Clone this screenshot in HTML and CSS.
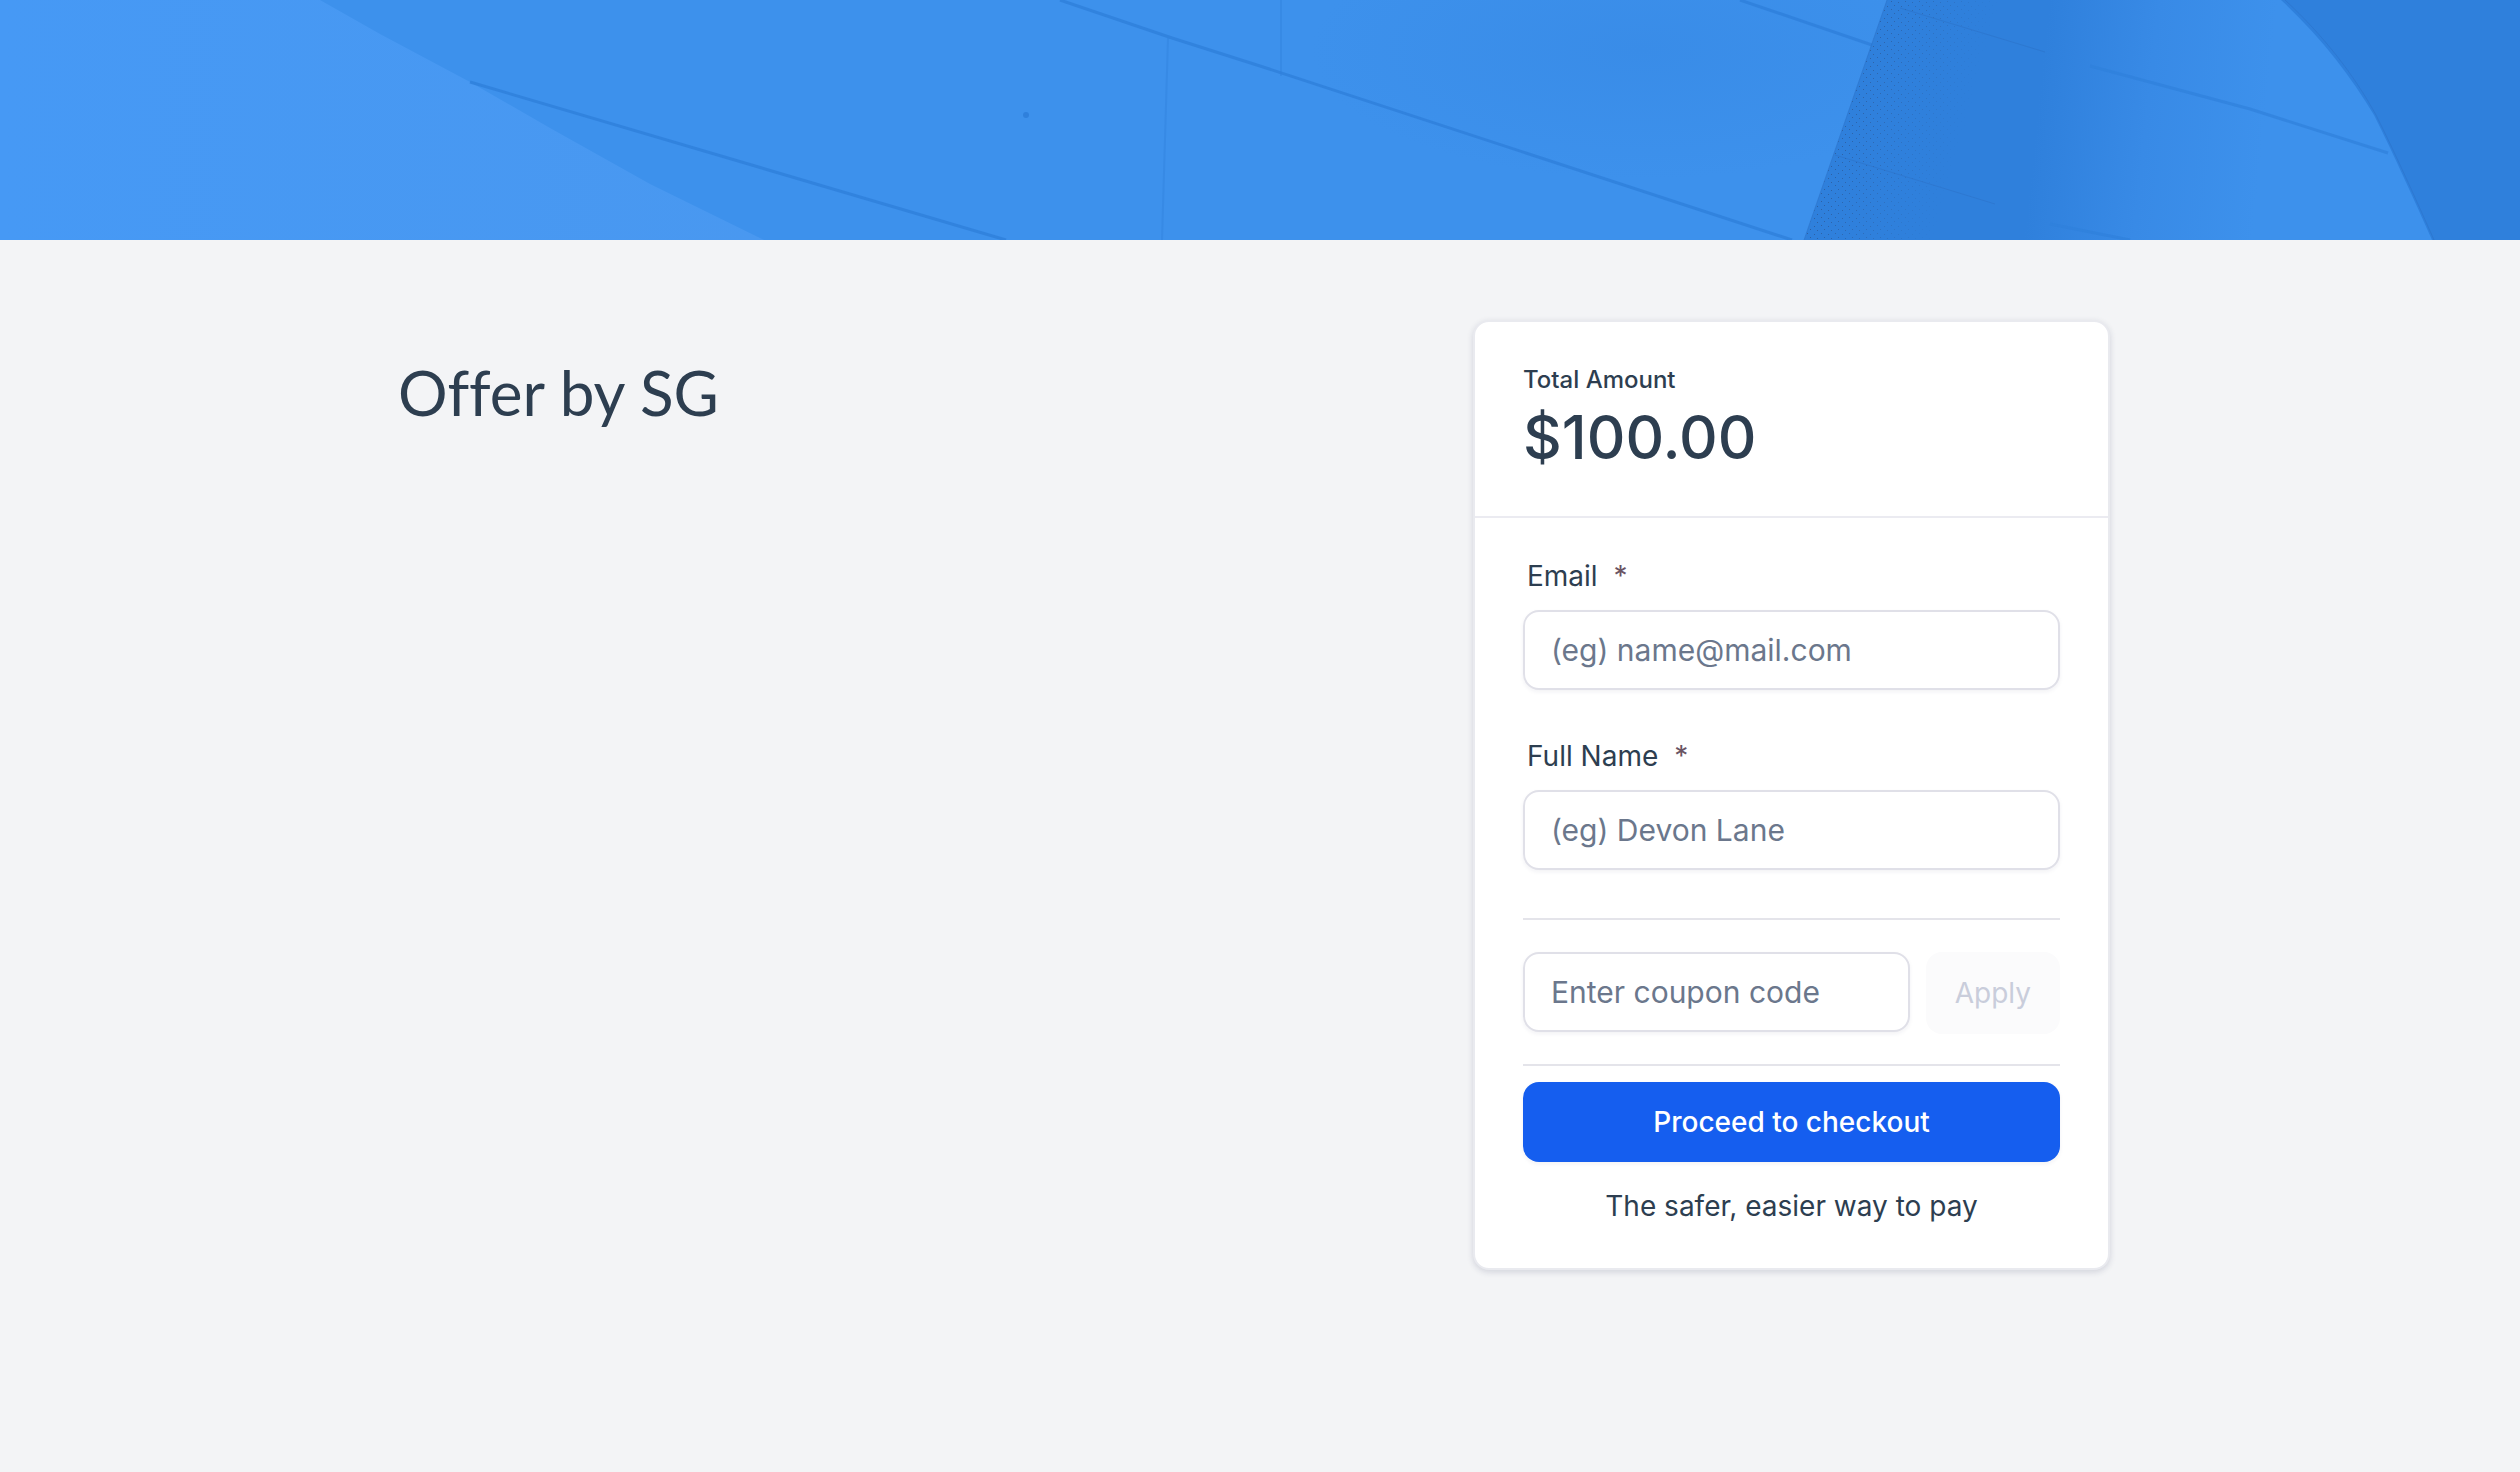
FILE: index.html
```html
<!DOCTYPE html>
<html lang="en">
<head>
<meta charset="utf-8">
<meta name="viewport" content="width=device-width, initial-scale=1">
<title>Offer by SG</title>
<link rel="stylesheet" href="styles.css">
</head>
<body>
<header class="banner">
  <svg class="banner-art" viewBox="0 0 2520 240" preserveAspectRatio="xMidYMid slice" aria-hidden="true">
    <defs>
      <linearGradient id="sky" x1="0" x2="1" y1="0" y2="0">
        <stop offset="0" stop-color="#4699f5"/>
        <stop offset="1" stop-color="#4998f0"/>
      </linearGradient>
      <linearGradient id="fold" gradientUnits="userSpaceOnUse" x1="1850" x2="2320" y1="0" y2="50">
        <stop offset="0" stop-color="#2f80dc"/>
        <stop offset="0.42" stop-color="#2f80dc"/>
        <stop offset="0.65" stop-color="#388ae6"/>
        <stop offset="0.9" stop-color="#3d91ec"/>
      </linearGradient>
      <linearGradient id="fade" gradientUnits="userSpaceOnUse" x1="1860" x2="1990" y1="0" y2="36">
        <stop offset="0" stop-color="#fff"/>
        <stop offset="1" stop-color="#000"/>
      </linearGradient>
      <radialGradient id="shade">
        <stop offset="0" stop-color="#3587e3" stop-opacity="0.5"/>
        <stop offset="1" stop-color="#3587e3" stop-opacity="0"/>
      </radialGradient>
      <pattern id="grain" width="14" height="8" patternUnits="userSpaceOnUse">
        <path fill="#2d5c9c" d="M1 1h1v1h-1zM8 2h1v1h-1zM4 5h1v1h-1zM11 6h1v1h-1z"/>
      </pattern>
      <mask id="grain-mask"><path fill="url(#fade)" d="M1887 0H2000V240H1804Z"/></mask>
    </defs>
    <path fill="#3d91ec" d="M0 0H2520V240H0Z"/>
    <ellipse cx="1640" cy="50" rx="330" ry="130" fill="url(#shade)"/>
    <path fill="url(#sky)" d="M0 0H320L380 34L470 82L550 128L650 184L764 240H0Z"/>
    <path fill="url(#fold)" d="M1887 0H2281C2320 36 2350 75 2374 115C2394 155 2412 195 2432 240H1804Z"/>
    <path fill="url(#grain)" mask="url(#grain-mask)" d="M1887 0H2000V240H1804Z"/>
    <path fill="#2f80dc" d="M2281 0H2520V240H2432C2412 195 2394 155 2374 115C2350 75 2320 36 2281 0Z"/>
    <g fill="none" stroke="#2f80dc">
      <path stroke-width="3" stroke-opacity="0.85" d="M470 82L1006 240M1060 0L1172 38L1260 66L1792 240M1740 0L1872 45"/>
      <path stroke-width="3" stroke-opacity="0.7" d="M2090 66L2250 109L2388 153M2050 224L2130 240"/>
      <path stroke-opacity="0.4" stroke-width="2" d="M1168 38L1162 240M1281 0V76"/>
      <path stroke="#2b70c5" stroke-opacity="0.5" d="M1887 0L1804 240M1900 8L2045 52M1835 155L1995 204M2285 0C2324 36 2354 75 2376 115C2396 155 2414 195 2434 240"/>
    </g>
    <ellipse cx="1026" cy="115" rx="3" ry="3" fill="#2f80dc"/>
  </svg>
</header>
<main class="page">
  <div class="layout">
    <h1 class="title">Offer by SG</h1>
    <form class="card">
      <div class="summary">
        <span class="summary-label">Total Amount</span>
        <strong class="summary-amount">$100.00</strong>
      </div>
      <div class="details">
        <div class="field">
          <label class="label" for="email">Email <span class="required">*</span></label>
          <input class="input" id="email" type="email" placeholder="(eg) name@mail.com" required>
        </div>
        <div class="field">
          <label class="label" for="name">Full Name <span class="required">*</span></label>
          <input class="input" id="name" type="text" placeholder="(eg) Devon Lane" required>
        </div>
        <div class="coupon">
          <input class="input" type="text" aria-label="Coupon code" placeholder="Enter coupon code">
          <button class="apply" type="button" disabled>Apply</button>
        </div>
        <button class="checkout" type="submit">Proceed to checkout</button>
        <p class="note">The safer, easier way to pay</p>
      </div>
    </form>
  </div>
</main>
</body>
</html>
```

FILE: styles.css
```css
* {
  box-sizing: border-box;
}

body {
  margin: 0;
  min-height: 100vh;
  background: #f3f4f6;
  color: #2d3e50;
  font-family: Inter, "Liberation Sans", sans-serif;
  font-size: 28px;
  line-height: 40px;
}

.banner {
  height: 240px;
  background: #3d91ec;
}

.banner-art {
  display: block;
  width: 100%;
  height: 100%;
}

.page {
  padding: 80px 14px 80px 0;
}

.layout {
  display: grid;
  grid-template-columns: minmax(0, 1fr) minmax(0, 637px);
  align-items: start;
  max-width: 1714px;
  margin: 0 auto;
}

.title {
  margin: 0;
  padding: 34px 2px 0;
  font-family: Lato, "Liberation Sans", sans-serif;
  font-size: 62px;
  font-weight: 400;
  line-height: 76px;
  font-variant-ligatures: none;
}

.card {
  border: 2px solid #e9eaef;
  border-radius: 16px;
  background: #fff;
  box-shadow: 0 2px 6px rgba(30, 35, 80, 0.16);
}

.summary {
  display: flex;
  flex-direction: column;
  padding: 40px 48px;
  border-bottom: 2px solid #ebebf1;
}

.summary-label {
  font-size: 24px;
  font-weight: 500;
  line-height: 36px;
}

.summary-amount {
  font-size: 60px;
  font-weight: 500;
  line-height: 78px;
}

.details {
  display: flex;
  flex-direction: column;
  padding: 40px 48px 42px;
}

.field {
  display: flex;
  flex-direction: column;
  gap: 16px;
  margin-bottom: 48px;
}

.label {
  padding-left: 4px;
  line-height: 36px;
}

.required {
  margin-left: 8px;
  color: #6b5563;
}

.input {
  width: 100%;
  min-width: 0;
  height: 80px;
  padding: 0 26px;
  border: 2px solid #e0e0e8;
  border-radius: 16px;
  background: #fff;
  box-shadow: 0 2px 4px rgba(30, 35, 80, 0.06);
  color: inherit;
  font: inherit;
  font-size: 30px;
}

.input::placeholder {
  color: #6b778c;
  opacity: 1;
}

.coupon {
  display: flex;
  align-items: flex-start;
  gap: 16px;
  margin-bottom: 16px;
  padding: 32px 0 30px;
  border: solid #e4e4ea;
  border-width: 2px 0;
}

.apply,
.checkout {
  border: 0;
  border-radius: 16px;
  font: inherit;
}

.apply {
  height: 82px;
  padding: 0 29px;
  background: #fbfbfc;
  color: #c9cddb;
}

.checkout {
  height: 80px;
  background: #155eef;
  box-shadow: 0 2px 4px rgba(30, 35, 80, 0.06);
  color: #fff;
  font-weight: 500;
}

.note {
  margin: 24px 0 0;
  text-align: center;
}
```
